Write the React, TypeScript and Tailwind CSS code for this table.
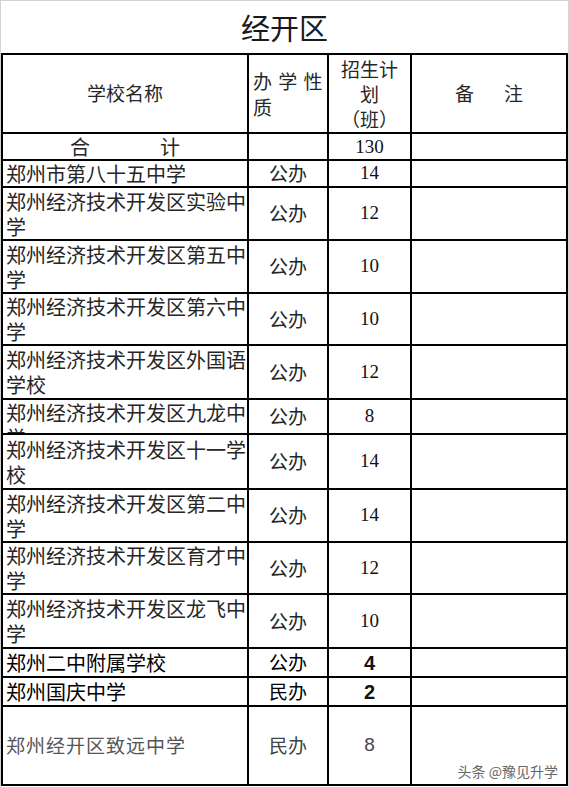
import React from "react";

const cjk = "font-['Noto_Sans_CJK_SC',sans-serif]";
const serifNum = "font-['Liberation_Serif','Noto_Sans_CJK_SC',serif]";

type Row = { name: string; type: string; n: string; clip?: boolean };

const rows: Row[] = [
  { name: "郑州市第八十五中学", type: "公办", n: "14" },
  { name: "郑州经济技术开发区实验中学", type: "公办", n: "12" },
  { name: "郑州经济技术开发区第五中学", type: "公办", n: "10" },
  { name: "郑州经济技术开发区第六中学", type: "公办", n: "10" },
  { name: "郑州经济技术开发区外国语学校", type: "公办", n: "12" },
  { name: "郑州经济技术开发区九龙中学", type: "公办", n: "8", clip: true },
  { name: "郑州经济技术开发区十一学校", type: "公办", n: "14" },
  { name: "郑州经济技术开发区第二中学", type: "公办", n: "14" },
  { name: "郑州经济技术开发区育才中学", type: "公办", n: "12" },
  { name: "郑州经济技术开发区龙飞中学", type: "公办", n: "10" },
];

export default function App() {
  return (
    <div className={`w-[569px] h-[787px] bg-white border-t border-x border-[#d2d2d2] ${cjk}`}>
      <div className="h-[52px] flex items-center justify-center text-[29px] text-[#1a1a1a] leading-none">
        经开区
      </div>
      <div className="grid w-[567px] grid-cols-[244px_78px_81px_154px] grid-rows-[77px_25px_25px_51px_51px_50px_52px_33px_53px_51px_50px_52px_27px_27px_77px] gap-[2px] bg-black p-[2px] text-[#262626]">
        {/* header */}
        <div className="bg-white flex items-center justify-center text-[19px]">学校名称</div>
        <div className="bg-white flex items-center pl-[4px] text-[19px] leading-[26px] tracking-[1px]">
          <span>
            办 学 性<br />质
          </span>
        </div>
        <div className="bg-white flex items-center justify-center text-center text-[19px] leading-[25px]">
          <span>
            招生计<br />划<br />（班）
          </span>
        </div>
        <div className="bg-white flex items-center justify-center gap-[30px] text-[19px]">
          <span>备</span>
          <span>注</span>
        </div>

        {/* total */}
        <div className="bg-white flex items-center justify-center gap-[70px] text-[20px] leading-[25px]">
          <span>合</span>
          <span>计</span>
        </div>
        <div className="bg-white"></div>
        <div className={`bg-white flex items-center justify-center text-[19px] leading-[25px] text-[#111] ${serifNum}`}>130</div>
        <div className="bg-white"></div>

        {rows.map((r) => (
          <React.Fragment key={r.name}>
            <div
              className={`bg-white overflow-hidden flex ${r.clip ? "items-start" : "items-center"} pl-[3px] text-[20px] leading-[25px]`}
            >
              <span>{r.name}</span>
            </div>
            <div className="bg-white flex items-center justify-center text-[19px]">{r.type}</div>
            <div className={`bg-white flex items-center justify-center text-[19px] text-[#111] ${serifNum}`}>{r.n}</div>
            <div className="bg-white"></div>
          </React.Fragment>
        ))}

        {/* bottom rows */}
        <div className="bg-white flex items-center pl-[3px] text-[20px] text-black">郑州二中附属学校</div>
        <div className="bg-white flex items-center justify-center text-[19px] text-black">公办</div>
        <div className="bg-white flex items-center justify-center text-[20px] font-semibold text-[#111] font-['Liberation_Sans',sans-serif]">4</div>
        <div className="bg-white"></div>

        <div className="bg-white flex items-center pl-[3px] text-[20px] text-black">郑州国庆中学</div>
        <div className="bg-white flex items-center justify-center text-[19px] text-black">民办</div>
        <div className="bg-white flex items-center justify-center text-[20px] font-semibold text-[#111] font-['Liberation_Sans',sans-serif]">2</div>
        <div className="bg-white"></div>

        <div className="bg-white flex items-center pl-[3px] text-[19px] tracking-[1px] text-[#555]">郑州经开区致远中学</div>
        <div className="bg-white flex items-center justify-center text-[19px] text-[#444]">民办</div>
        <div className="bg-white flex items-center justify-center text-[19px] text-[#444] font-['Liberation_Sans',sans-serif]">8</div>
        <div className="bg-white relative">
          <span className="absolute right-[8px] bottom-[6px] text-[14px] leading-none text-[#666] whitespace-nowrap [text-shadow:0_0_2px_#fff]">
            头条 @豫见升学
          </span>
        </div>
      </div>
    </div>
  );
}
